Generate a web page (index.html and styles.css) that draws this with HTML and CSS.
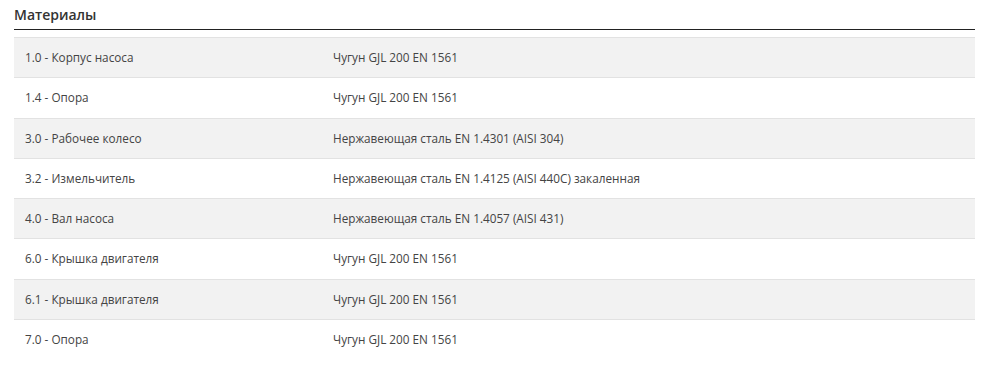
FILE: index.html
```html
<!DOCTYPE html>
<html lang="ru">
<head>
<meta charset="utf-8">
<link rel="stylesheet" href="styles.css">
</head>
<body>
<section class="materials">
  <h2 class="title">Материалы</h2>
  <div class="table">
    <div class="row odd"><div class="cell">1.0 - Корпус насоса</div><div class="cell">Чугун GJL 200 EN 1561</div></div>
    <div class="row"><div class="cell">1.4 - Опора</div><div class="cell">Чугун GJL 200 EN 1561</div></div>
    <div class="row odd"><div class="cell">3.0 - Рабочее колесо</div><div class="cell">Нержавеющая сталь EN 1.4301 (AISI 304)</div></div>
    <div class="row"><div class="cell">3.2 - Измельчитель</div><div class="cell">Нержавеющая сталь EN 1.4125 (AISI 440C) закаленная</div></div>
    <div class="row odd"><div class="cell">4.0 - Вал насоса</div><div class="cell">Нержавеющая сталь EN 1.4057 (AISI 431)</div></div>
    <div class="row"><div class="cell">6.0 - Крышка двигателя</div><div class="cell">Чугун GJL 200 EN 1561</div></div>
    <div class="row odd"><div class="cell">6.1 - Крышка двигателя</div><div class="cell">Чугун GJL 200 EN 1561</div></div>
    <div class="row"><div class="cell">7.0 - Опора</div><div class="cell">Чугун GJL 200 EN 1561</div></div>
  </div>
</section>
</body>
</html>
```

FILE: styles.css
```css
html, body {
  margin: 0;
  padding: 0;
  background: #fff;
}
body {
  font-family: "Open Sans", "DejaVu Sans", sans-serif;
  color: #444;
}
.materials {
  padding: 5px 11px 0 14px;
}
.title {
  margin: 0;
  font-size: 14px;
  line-height: 20px;
  font-weight: 600;
  color: #333;
  padding-bottom: 4px;
  border-bottom: 1px solid #222;
}
.table {
  margin-top: 7px;
}
.row {
  display: grid;
  grid-template-columns: 308px 1fr;
  border-top: 1px solid #e2e2e2;
}
.row.odd {
  background: #f2f2f2;
}
.cell {
  padding: 11px 11px;
  font-size: 11.75px;
  line-height: 17.3px;
}
```
